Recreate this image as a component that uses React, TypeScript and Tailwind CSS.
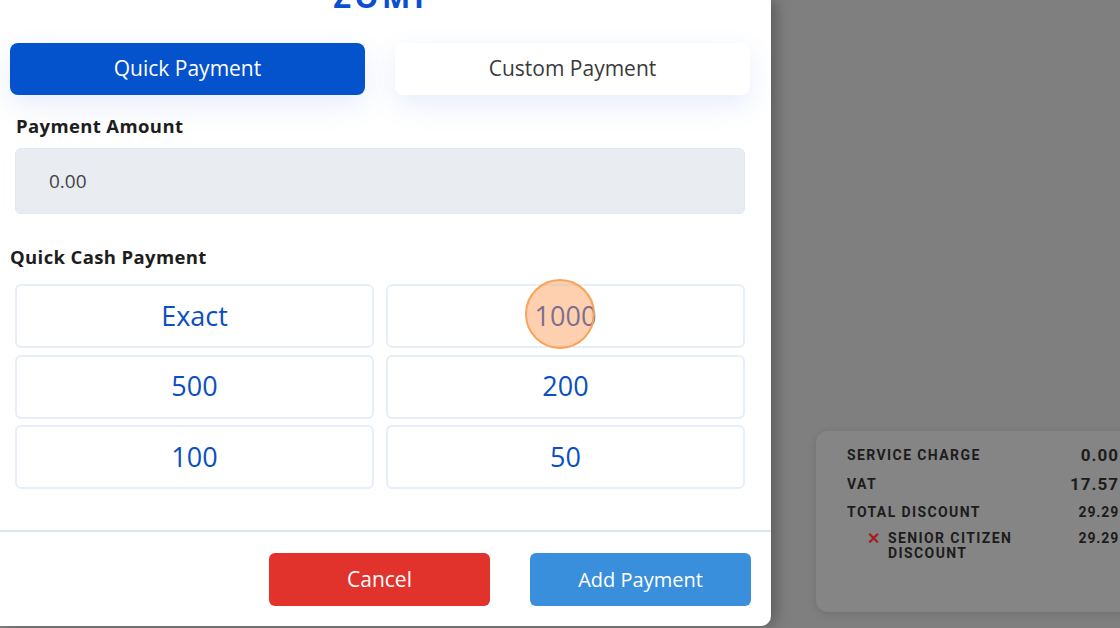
const FONT = { fontFamily: '"Open Sans", "Noto Sans", sans-serif' };

const QUICK_CASH = ['Exact', '1000', '500', '200', '100', '50'];

function SummaryRow({ label, value, big }: { label: string; value: string; big?: boolean }) {
  return (
    <div className="flex items-center justify-between leading-[20px]">
      <span className="text-[14px] font-bold uppercase tracking-[0.1em] text-[#1c1c1c]">{label}</span>
      <span
        className={`font-bold tracking-[0.06em] text-[#1c1c1c] ${big ? 'text-[17px]' : 'text-[14px]'}`}
      >
        {value}
      </span>
    </div>
  );
}

export default function App() {
  return (
    <div
      className="flex h-[628px] w-[1120px] overflow-hidden bg-[#7f7f7f]"
      style={{ fontFamily: 'Roboto, "Liberation Sans", sans-serif' }}
    >
      {/* Payment modal */}
      <div
        className="relative z-10 flex h-[626px] w-[771px] shrink-0 flex-col rounded-br-[10px] bg-white shadow-[6px_0_14px_rgba(0,0,0,0.25)]"
        style={FONT}
      >
        <div className="flex h-[12px] items-end justify-center overflow-hidden pl-[10px] pr-[20px]">
          <span className="text-[30px] font-bold leading-none tracking-[0.12em] text-[#0a4fcf]">ZOMI</span>
        </div>

        <div className="mt-[31px] grid grid-cols-2 gap-[30px] pl-[10px] pr-[21px]">
          <button className="h-[52px] rounded-[8px] bg-[#0452cc] text-[21px] text-white shadow-[0_10px_28px_rgba(60,110,220,0.12)]">
            Quick Payment
          </button>
          <button className="h-[52px] rounded-[8px] bg-white text-[21px] text-[#3a3a3a] shadow-[0_10px_28px_rgba(60,110,220,0.12)]">
            Custom Payment
          </button>
        </div>

        <div className="mt-[19px] pl-[16px] text-[18.5px] font-bold leading-[24px] tracking-[0.02em] text-[#1d1d1d]">
          Payment Amount
        </div>
        <div className="ml-[15px] mr-[26px] mt-[10px] flex h-[66px] items-center rounded-[6px] border border-[#dfe8f5] bg-[#e9ecf1] pl-[33px] text-[19px] text-[#444]">
          0.00
        </div>

        <div className="mt-[31px] pl-[10px] text-[18.5px] font-bold leading-[24px] tracking-[0.02em] text-[#1d1d1d]">
          Quick Cash Payment
        </div>
        <div className="ml-[15px] mr-[26px] mt-[15px] grid grid-cols-2 gap-x-[12px] gap-y-[6.5px]">
          {QUICK_CASH.map((v) => (
            <button
              key={v}
              className="relative flex h-[64px] items-center justify-center rounded-[6px] border-2 border-[#e6eefa] bg-white text-[27px] text-[#0b4fc2]"
            >
              {v}
              {v === '1000' && (
                <span className="absolute left-[137px] top-[-7px] h-[70px] w-[70px] rounded-full border-2 border-[#f7a358] bg-[rgba(255,150,80,0.45)]" />
              )}
            </button>
          ))}
        </div>

        <div className="mt-auto flex justify-end gap-[40px] border-t-2 border-[#dbe6ee] pb-[20px] pr-[20px] pt-[21px]">
          <button className="h-[53px] w-[221px] rounded-[6px] bg-[#e1332c] text-[21px] text-white">Cancel</button>
          <button className="h-[53px] w-[221px] rounded-[6px] bg-[#3a8fdc] text-[20px] text-white">
            Add Payment
          </button>
        </div>
      </div>

      {/* Dimmed order summary behind the overlay */}
      <div className="flex-1 pl-[45px] pt-[431px]">
        <div className="h-[181px] w-[330px] rounded-[12px] bg-[#858585] pl-[31px] pr-[27px] pt-[14px] shadow-[0_2px_8px_rgba(0,0,0,0.12)]">
          <div className="flex flex-col gap-[8.5px]">
            <SummaryRow label="Service Charge" value="0.00" big />
            <SummaryRow label="VAT" value="17.57" big />
            <SummaryRow label="Total Discount" value="29.29" />
            <div className="flex items-start justify-between">
              <div className="flex items-start gap-[8px] pl-[20px]">
                <span className="text-[16px] font-bold leading-[16px] text-[#a3201c]">✕</span>
                <span className="text-[14px] font-bold uppercase leading-[15px] tracking-[0.1em] text-[#1c1c1c]">
                  Senior Citizen
                  <br />
                  Discount
                </span>
              </div>
              <span className="text-[14px] font-bold leading-[15px] tracking-[0.06em] text-[#1c1c1c]">29.29</span>
            </div>
          </div>
        </div>
      </div>
    </div>
  );
}
